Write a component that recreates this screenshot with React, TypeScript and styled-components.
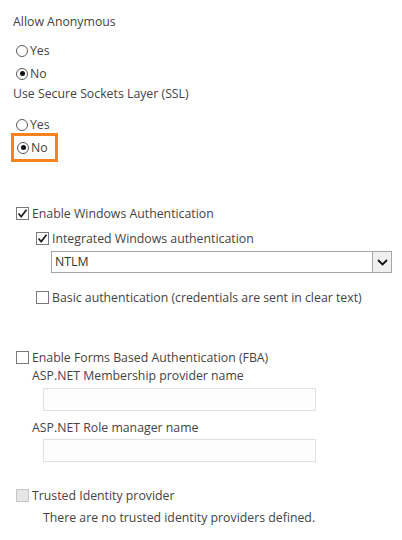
import React from 'react';
import styled, { createGlobalStyle } from 'styled-components';

const GlobalStyle = createGlobalStyle`
  html, body {
    margin: 0;
    padding: 0;
    background: #ffffff;
  }
  body {
    font-family: "Segoe UI", "Open Sans", "Noto Sans", sans-serif;
    font-size: 12.3px;
    color: #444444;
  }
`;

const Page = styled.div`
  width: 402px;
  height: 540px;
  padding: 13px 0 0 13px;
  box-sizing: border-box;
  overflow: hidden;
`;

const FieldLabel = styled.div<{ top?: number; indent?: number }>`
  height: 18px;
  line-height: 18px;
  margin-top: ${({ top }) => top || 0}px;
  padding-left: ${({ indent }) => indent || 0}px;
  white-space: nowrap;
`;

const OptionGroup = styled.div<{ top?: number }>`
  margin-top: ${({ top }) => top || 0}px;
  display: flex;
  flex-direction: column;
`;

const OptionRow = styled.label<{ indent?: number; top?: number }>`
  display: flex;
  align-items: center;
  height: 23px;
  margin-top: ${({ top }) => top || 0}px;
  padding-left: ${({ indent }) => indent || 0}px;
  white-space: nowrap;
`;

const Highlight = styled.div`
  display: flex;
  align-self: flex-start;
  margin: -3px 0 0 -2px;
  border: 3px solid #f7801f;
  padding: 0 7px 0 0;
`;

const RadioMark = styled.span<{ checked?: boolean }>`
  position: relative;
  width: 12px;
  height: 12px;
  margin: 0 2px 0 3px;
  border: 1px solid #5a5a5a;
  border-radius: 50%;
  box-sizing: border-box;
  flex: none;
  &::after {
    content: '';
    display: ${({ checked }) => (checked ? 'block' : 'none')};
    position: absolute;
    left: 2.5px;
    top: 2.5px;
    width: 5px;
    height: 5px;
    border-radius: 50%;
    background: #111111;
  }
`;

const BoxMark = styled.span<{ disabled?: boolean }>`
  display: flex;
  align-items: center;
  justify-content: center;
  width: 13px;
  height: 13px;
  margin: 0 3px 0 3px;
  border: 1px solid ${({ disabled }) => (disabled ? '#c6c6c6' : '#7a7a7a')};
  background: ${({ disabled }) => (disabled ? '#e6e6e6' : '#ffffff')};
  box-sizing: border-box;
  flex: none;
`;

const Select = styled.div`
  display: flex;
  align-items: stretch;
  width: 341px;
  height: 22px;
  margin: 1px 0 0 38px;
  border: 1px solid #a6a6a6;
  box-sizing: border-box;
  background: #ffffff;
  color: #333333;
`;

const SelectValue = styled.div`
  flex: 1;
  padding-left: 3px;
  line-height: 20px;
`;

const SelectButton = styled.div`
  width: 18px;
  border-left: 1px solid #a6a6a6;
  background: #f0f0f0;
  display: flex;
  align-items: center;
  justify-content: center;
`;

const TextInput = styled.div<{ top?: number }>`
  width: 273px;
  height: 23px;
  margin: ${({ top }) => top || 0}px 0 0 30px;
  border: 1px solid #e1e1e1;
  background: #fdfdfd;
  box-sizing: border-box;
`;

const Note = styled.div<{ top?: number }>`
  height: 18px;
  line-height: 18px;
  margin-top: ${({ top }) => top || 0}px;
  padding-left: 30px;
  white-space: nowrap;
`;

const Radio: React.FC<{ checked?: boolean; label: string }> = ({ checked, label }) => (
  <>
    <RadioMark checked={checked} />
    <span>{label}</span>
  </>
);

const Check: React.FC<{ checked?: boolean; disabled?: boolean }> = ({ checked, disabled }) => (
  <BoxMark disabled={disabled}>
    {checked && (
      <svg width="11" height="11" viewBox="0 0 11 11">
        <path d="M1.5 5.5 L4.2 8.5 L9.5 1.8" fill="none" stroke="#222" strokeWidth="1.8" />
      </svg>
    )}
  </BoxMark>
);

const Chevron = () => (
  <svg width="11" height="7" viewBox="0 0 11 7">
    <path d="M1 1 L5.5 5.5 L10 1" fill="none" stroke="#111" strokeWidth="1.8" />
  </svg>
);

const App: React.FC = () => {
  return (
    <>
      <GlobalStyle />
      <Page>
        <FieldLabel>Allow Anonymous</FieldLabel>
        <OptionGroup top={8}>
          <OptionRow><Radio label="Yes" /></OptionRow>
          <OptionRow><Radio checked label="No" /></OptionRow>
        </OptionGroup>
        <FieldLabel>Use Secure Sockets Layer (SSL)</FieldLabel>
        <OptionGroup top={10}>
          <OptionRow><Radio label="Yes" /></OptionRow>
          <Highlight>
            <OptionRow><Radio checked label="No" /></OptionRow>
          </Highlight>
        </OptionGroup>

        <OptionRow top={40}>
          <Check checked />
          <span>Enable Windows Authentication</span>
        </OptionRow>
        <OptionRow indent={20} top={2}>
          <Check checked />
          <span>Integrated Windows authentication</span>
        </OptionRow>
        <Select>
          <SelectValue>NTLM</SelectValue>
          <SelectButton><Chevron /></SelectButton>
        </Select>
        <OptionRow indent={20} top={13}>
          <Check />
          <span>Basic authentication (credentials are sent in clear text)</span>
        </OptionRow>

        <OptionRow top={37}>
          <Check />
          <span>Enable Forms Based Authentication (FBA)</span>
        </OptionRow>
        <FieldLabel indent={19} top={-2}>ASP.NET Membership provider name</FieldLabel>
        <TextInput top={3} />
        <FieldLabel indent={19} top={8}>ASP.NET Role manager name</FieldLabel>
        <TextInput top={2} />

        <OptionRow top={22}>
          <Check disabled />
          <span>Trusted Identity provider</span>
        </OptionRow>
        <Note top={2}>There are no trusted identity providers defined.</Note>
      </Page>
    </>
  );
};

export default App;
